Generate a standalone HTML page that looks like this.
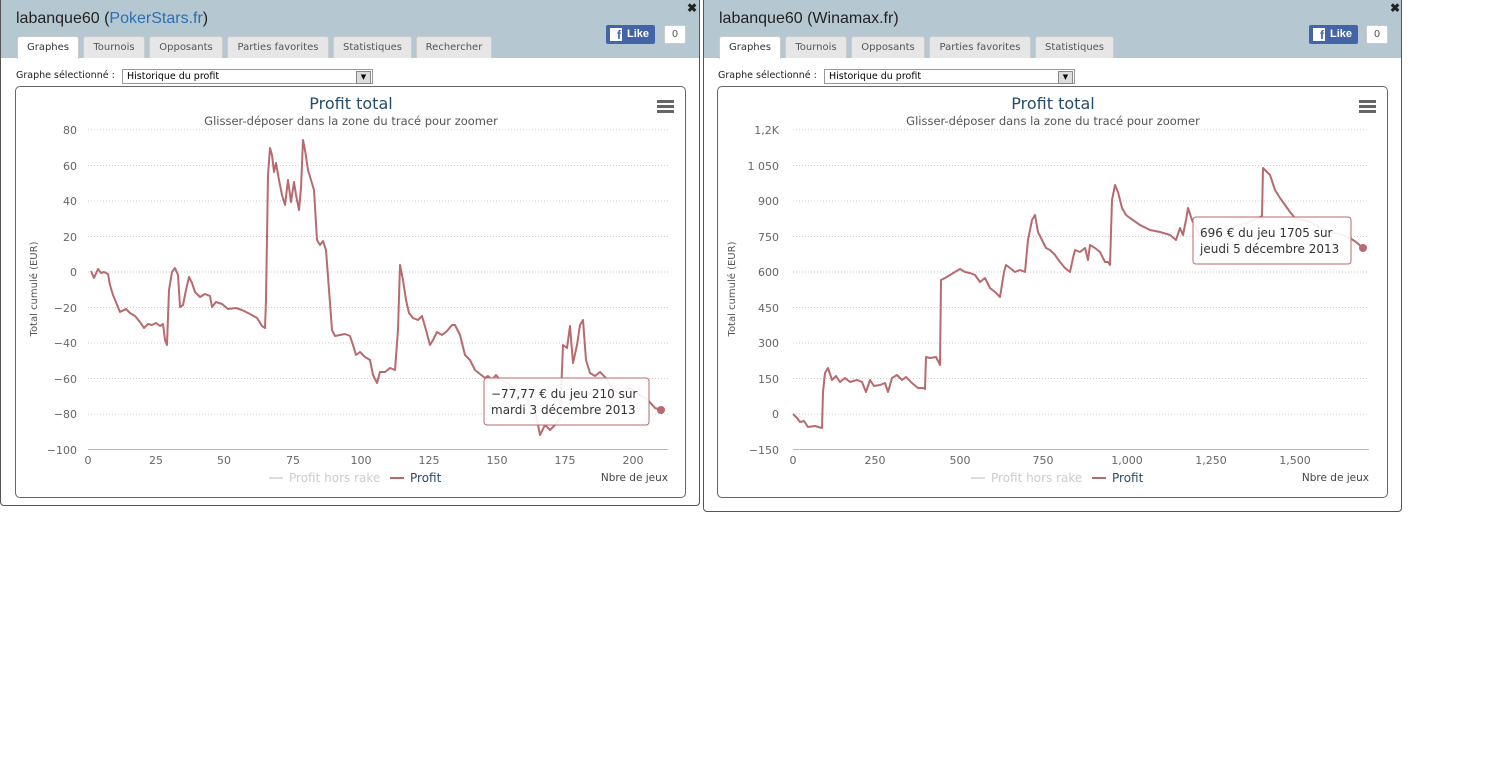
<!DOCTYPE html>
<html><head><meta charset="utf-8"><style>
body{margin:0;width:1497px;height:761px;background:#fff;position:relative;overflow:hidden;font-family:"DejaVu Sans","Liberation Sans",sans-serif}
.p{position:absolute;top:0;background:#fff;border:1px solid #555;border-top:none;border-radius:0 0 4px 4px;box-sizing:border-box}
.hd{position:absolute;left:0;top:0;right:0;height:58px;background:#b5c8d1}
.ttl{position:absolute;left:15px;top:10px;font:16px "Liberation Sans",sans-serif;color:#222}
.ttl a{color:#2a6fb0}
.tab{position:absolute;top:36px;height:22px;background:#e6e6e6;border:1px solid #ccc;border-bottom:none;border-radius:3px 3px 0 0;font-size:10px;color:#555;line-height:22px;text-align:center;box-sizing:border-box}
.tab.a{background:#fff;color:#333;height:23px}
.x{position:absolute;top:1px;font:bold 12px sans-serif;color:#222}
.fb{position:absolute;top:25px;width:49px;height:19px;background:#4464a8;border-radius:2px;color:#fff;font:bold 11px "Liberation Sans",sans-serif;line-height:19px}
.fb i{position:absolute;left:4px;top:3px;width:12px;height:13px;background:#fff;color:#4464a8;font-style:normal;font-size:12px;line-height:15px;text-align:right;padding-right:1px;box-sizing:border-box}
.fb span{position:absolute;left:21px}
.cnt{position:absolute;top:25px;width:22px;height:19px;border:1px solid #ccc;background:#fff;border-radius:2px;font-size:10px;color:#555;line-height:18px;text-align:center;box-sizing:border-box}
.sl{position:absolute;top:70px;font-size:9.5px;color:#222}
.sel{position:absolute;top:69px;width:251px;height:15px;border:1px solid #999;background:#fff;font-size:9.5px;line-height:14px;box-sizing:border-box;padding-left:4px}
.sel b{position:absolute;right:1px;top:1px;width:13px;height:11px;border:1px solid #888;background:#ddd;font-size:7px;line-height:11px;text-align:center}
.ch{position:absolute;top:86px;height:412px;border:1px solid #666;border-radius:5px;box-sizing:border-box}
svg{position:absolute;left:0;top:0}
</style></head><body>

<div class="p" style="left:0;width:700px;height:506px">
<div class="hd"></div>
<div class="ttl">labanque60 (<a>PokerStars.fr</a>)</div>
<div class="x" style="left:686px">✖</div>
<div class="fb" style="left:605px"><i>f</i><span>Like</span></div>
<div class="cnt" style="left:663px">0</div>
<div class="tab a" style="left:16px;width:62px">Graphes</div>
<div class="tab" style="left:82px;width:62px">Tournois</div>
<div class="tab" style="left:148px;width:74px">Opposants</div>
<div class="tab" style="left:226px;width:102px">Parties favorites</div>
<div class="tab" style="left:332px;width:79px">Statistiques</div>
<div class="tab" style="left:415px;width:76px">Rechercher</div>
<div class="sl" style="left:15px">Graphe sélectionné :</div>
<div class="sel" style="left:121px">Historique du profit<b>▼</b></div>
<div class="ch" style="left:14px;width:671px"></div>
</div>

<div class="p" style="left:703px;width:699px;height:512px">
<div class="hd"></div>
<div class="ttl">labanque60 (Winamax.fr)</div>
<div class="x" style="left:686px">✖</div>
<div class="fb" style="left:605px"><i>f</i><span>Like</span></div>
<div class="cnt" style="left:662px">0</div>
<div class="tab a" style="left:15px;width:62px">Graphes</div>
<div class="tab" style="left:81px;width:62px">Tournois</div>
<div class="tab" style="left:147px;width:74px">Opposants</div>
<div class="tab" style="left:225px;width:102px">Parties favorites</div>
<div class="tab" style="left:331px;width:79px">Statistiques</div>
<div class="sl" style="left:14px">Graphe sélectionné :</div>
<div class="sel" style="left:120px">Historique du profit<b>▼</b></div>
<div class="ch" style="left:13px;width:671px"></div>
</div>

<svg width="1497" height="761" font-family="DejaVu Sans, sans-serif">
<g font-size="11" fill="#666" text-anchor="end">
<g stroke="#ccc" stroke-dasharray="1,2">
<line x1="88" x2="668" y1="130" y2="130"/><line x1="88" x2="668" y1="165.5" y2="165.5"/><line x1="88" x2="668" y1="201" y2="201"/><line x1="88" x2="668" y1="236.5" y2="236.5"/><line x1="88" x2="668" y1="272" y2="272"/><line x1="88" x2="668" y1="307.5" y2="307.5"/><line x1="88" x2="668" y1="343" y2="343"/><line x1="88" x2="668" y1="378.5" y2="378.5"/><line x1="88" x2="668" y1="414" y2="414"/>
<line x1="793" x2="1369" y1="130" y2="130"/><line x1="793" x2="1369" y1="165.5" y2="165.5"/><line x1="793" x2="1369" y1="201" y2="201"/><line x1="793" x2="1369" y1="236.5" y2="236.5"/><line x1="793" x2="1369" y1="272" y2="272"/><line x1="793" x2="1369" y1="307.5" y2="307.5"/><line x1="793" x2="1369" y1="343" y2="343"/><line x1="793" x2="1369" y1="378.5" y2="378.5"/><line x1="793" x2="1369" y1="414" y2="414"/>
</g>
<line x1="88" x2="668" y1="449.5" y2="449.5" stroke="#bbb"/>
<line x1="793" x2="1369" y1="449.5" y2="449.5" stroke="#bbb"/>
<text x="77" y="134">80</text><text x="77" y="170">60</text><text x="77" y="205">40</text><text x="77" y="241">20</text><text x="77" y="276">0</text><text x="77" y="312">−20</text><text x="77" y="347">−40</text><text x="77" y="383">−60</text><text x="77" y="418">−80</text><text x="77" y="454">−100</text>
<text x="779" y="134">1,2K</text><text x="779" y="170">1 050</text><text x="779" y="205">900</text><text x="779" y="241">750</text><text x="779" y="276">600</text><text x="779" y="312">450</text><text x="779" y="347">300</text><text x="779" y="383">150</text><text x="779" y="418">0</text><text x="779" y="454">−150</text>
</g>
<g font-size="11" fill="#666" text-anchor="middle">
<text x="88" y="464">0</text><text x="156" y="464">25</text><text x="224" y="464">50</text><text x="293" y="464">75</text><text x="361" y="464">100</text><text x="429" y="464">125</text><text x="497" y="464">150</text><text x="565" y="464">175</text><text x="633" y="464">200</text>
<text x="793" y="464">0</text><text x="875" y="464">250</text><text x="960" y="464">500</text><text x="1043" y="464">750</text><text x="1127" y="464">1,000</text><text x="1211" y="464">1,250</text><text x="1295" y="464">1,500</text>
</g>
<g font-size="10" fill="#555" text-anchor="middle">
<text transform="translate(37,289) rotate(-90)">Total cumulé (EUR)</text>
<text transform="translate(735,289) rotate(-90)">Total cumulé (EUR)</text>
</g>
<g text-anchor="middle">
<text x="351" y="109" font-size="16" fill="#274b6d">Profit total</text>
<text x="351" y="125" font-size="11.5" fill="#555">Glisser-déposer dans la zone du tracé pour zoomer</text>
<text x="1053" y="109" font-size="16" fill="#274b6d">Profit total</text>
<text x="1053" y="125" font-size="11.5" fill="#555">Glisser-déposer dans la zone du tracé pour zoomer</text>
</g>
<g fill="#666"><rect x="657" y="100" width="17" height="3"/><rect x="657" y="105" width="17" height="3"/><rect x="657" y="110" width="17" height="3"/>
<rect x="1359" y="100" width="17" height="3"/><rect x="1359" y="105" width="17" height="3"/><rect x="1359" y="110" width="17" height="3"/></g>
<g font-size="10.5" fill="#444" text-anchor="end"><text x="668" y="481">Nbre de jeux</text><text x="1369" y="481">Nbre de jeux</text></g>
<g font-size="12">
<line x1="269" x2="283" y1="478" y2="478" stroke="#ddd" stroke-width="2"/><text x="289" y="482" fill="#ccc">Profit hors rake</text>
<line x1="390" x2="404" y1="478" y2="478" stroke="#b86a6e" stroke-width="2"/><text x="410" y="482" fill="#274b6d">Profit</text>
<line x1="971" x2="985" y1="478" y2="478" stroke="#ddd" stroke-width="2"/><text x="991" y="482" fill="#ccc">Profit hors rake</text>
<line x1="1092" x2="1106" y1="478" y2="478" stroke="#b86a6e" stroke-width="2"/><text x="1112" y="482" fill="#274b6d">Profit</text>
</g>
<g fill="none" stroke="#b86a6e" stroke-width="2" stroke-linejoin="round">
<polyline points="91,271 94,278 98,269 101,273 104,272 108,274 110,285 113,295 120,312 126,309 130,313 135,316 140,322 144,328 148,324 152,325 156,323 160,326 163,324 165,340 167,345 169,290 172,272 175,268 178,275 180,307 183,305 186,290 189,277 192,283 195,292 200,297 205,294 210,296 212,307 216,302 222,304 228,309 236,308 242,310 250,314 257,318 262,326 265,328 266,300 268,175 270,148 272,155 274,172 276,163 279,180 282,195 285,205 288,180 291,202 294,182 296,195 299,210 301,188 303,140 305,150 308,170 311,180 314,190 317,240 320,245 323,241 326,250 329,290 332,330 335,336 340,335 345,334 350,336 353,345 356,355 360,352 365,357 370,360 373,375 377,383 380,372 385,372 390,368 395,370 398,330 400,265 403,280 406,300 409,313 413,318 418,320 422,316 426,330 430,345 433,340 437,332 442,335 447,331 452,325 455,325 460,335 465,355 470,360 475,370 480,374 485,378 488,376 492,380 496,375 500,380 508,383 515,390 520,392 528,400 535,410 540,435 545,425 550,430 555,425 560,418 563,345 567,348 570,326 573,363 577,345 580,325 583,320 586,360 590,373 595,376 600,372 605,377 610,385 615,390 620,395 630,388 640,395 648,400 655,408 661,410"/>
<polyline points="793,414 797,418 800,422 804,421 808,427 815,426 822,428 823,392 825,373 828,368 832,380 836,376 840,382 845,378 850,382 857,380 862,382 866,392 870,380 874,386 880,385 885,383 888,392 892,378 897,375 902,380 906,377 912,383 918,388 923,388 925,389 926,357 930,358 936,357 940,365 941,280 945,278 950,275 955,272 960,269 965,272 970,273 975,275 980,282 985,278 990,288 995,292 1000,297 1004,272 1006,265 1010,268 1015,272 1020,270 1025,272 1028,240 1032,220 1035,215 1038,232 1042,240 1046,248 1050,250 1055,255 1060,262 1065,268 1070,272 1073,258 1075,250 1080,252 1085,248 1088,260 1090,245 1095,248 1100,252 1105,262 1108,262 1110,265 1112,200 1115,185 1118,192 1122,208 1126,215 1130,218 1140,225 1150,230 1160,232 1170,235 1176,240 1180,228 1183,235 1186,220 1188,208 1192,220 1196,228 1200,236 1210,230 1220,232 1230,228 1240,225 1250,222 1258,218 1262,216 1263,168 1265,170 1270,175 1275,190 1280,198 1285,205 1290,212 1295,218 1310,222 1320,228 1330,232 1340,234 1350,238 1356,242 1363,248"/>
</g>
<circle cx="661" cy="410" r="4" fill="#b86a6e"/><circle cx="1363" cy="248" r="4" fill="#b86a6e"/>
<g font-size="12" fill="#333">
<rect x="484" y="378" width="165" height="47" rx="3" fill="#fff" fill-opacity="0.9" stroke="#b86a6e"/>
<text x="491" y="398">−77,77 € du jeu 210 sur</text><text x="491" y="414">mardi 3 décembre 2013</text>
<rect x="1193" y="217" width="158" height="47" rx="3" fill="#fff" fill-opacity="0.9" stroke="#b86a6e"/>
<text x="1200" y="237">696 € du jeu 1705 sur</text><text x="1200" y="253">jeudi 5 décembre 2013</text>
</g>
</svg>
</body></html>
